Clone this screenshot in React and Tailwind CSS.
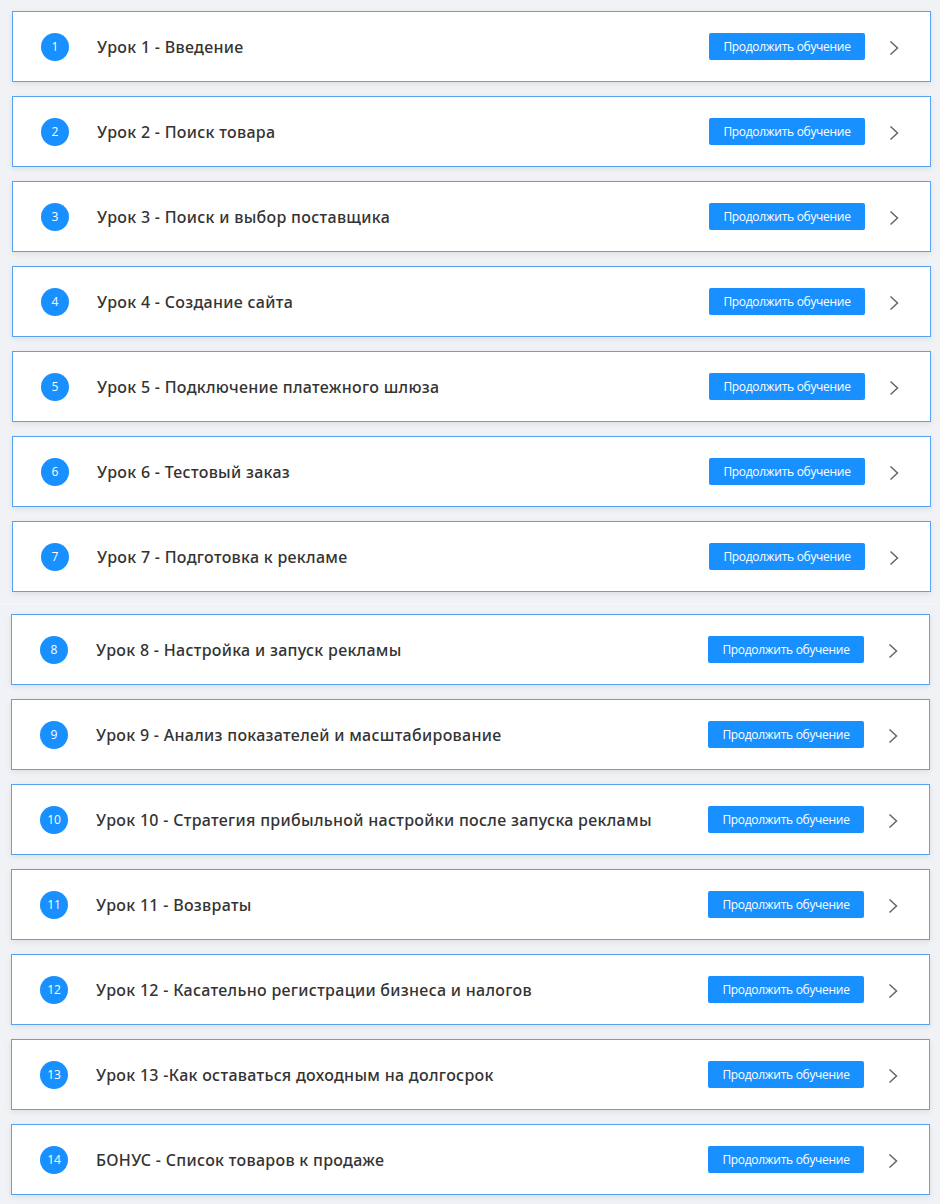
import React from "react";

const top = [
  "Урок 1 - Введение",
  "Урок 2 - Поиск товара",
  "Урок 3 - Поиск и выбор поставщика",
  "Урок 4 - Создание сайта",
  "Урок 5 - Подключение платежного шлюза",
  "Урок 6 - Тестовый заказ",
  "Урок 7 - Подготовка к рекламе",
];
const bottom = [
  "Урок 8 - Настройка и запуск рекламы",
  "Урок 9 - Анализ показателей и масштабирование",
  "Урок 10 - Стратегия прибыльной настройки после запуска рекламы",
  "Урок 11 - Возвраты",
  "Урок 12 - Касательно регистрации бизнеса и налогов",
  "Урок 13 -Как оставаться доходным на долгосрок",
  "БОНУС - Список товаров к продаже",
];

function Row({ n, title }) {
  return (
    <div className="flex h-[71px] items-center border border-[#55a3f2] bg-white pl-[28px] pr-[31px] shadow-[0_2px_6px_rgba(0,0,0,0.08)]">
      <div className="flex h-[28px] w-[28px] shrink-0 items-center justify-center rounded-full bg-[#1890ff] text-[12px] font-medium text-white">
        {n}
      </div>
      <div
        className="ml-[28px] text-[16px] font-medium tracking-[0.3px] text-[#333]"
        style={{ fontFamily: '"Noto Sans", "Open Sans", sans-serif' }}
      >
        {title}
      </div>
      <button className="ml-auto flex h-[27px] w-[156px] items-center justify-center rounded-[2px] bg-[#1890ff] text-[12px] tracking-[-0.3px] text-white">
        Продолжить обучение
      </button>
      <svg className="ml-[24px] mt-[2px]" width="10" height="16" viewBox="0 0 10 16" fill="none">
        <polyline points="1.5,1.5 8.5,8 1.5,14.5" stroke="#666" strokeWidth="1.5" />
      </svg>
    </div>
  );
}

export default function App() {
  return (
    <div
      className="min-h-[1204px] w-[940px] bg-[#f0f2f5]"
      style={{ fontFamily: '"Open Sans", "Noto Sans", sans-serif' }}
    >
      <div className="flex flex-col gap-[14px] pl-[12px] pr-[9px] pt-[11px]">
        {top.map((t, i) => (
          <Row key={i} n={i + 1} title={t} />
        ))}
      </div>
      <div className="mt-[11px] h-[1px] bg-[#f6f7f9]" />
      <div className="mt-[10px] flex flex-col gap-[14px] pl-[11px] pr-[10px]">
        {bottom.map((t, i) => (
          <Row key={i} n={i + 8} title={t} />
        ))}
      </div>
    </div>
  );
}
